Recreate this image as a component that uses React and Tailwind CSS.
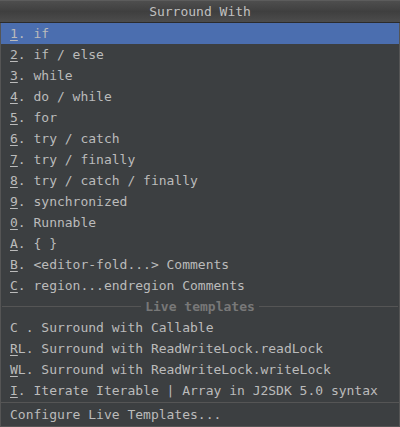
import React from "react";

const items = [
  ["1", ". if"],
  ["2", ". if / else"],
  ["3", ". while"],
  ["4", ". do / while"],
  ["5", ". for"],
  ["6", ". try / catch"],
  ["7", ". try / finally"],
  ["8", ". try / catch / finally"],
  ["9", ". synchronized"],
  ["0", ". Runnable"],
  ["A", ". { }"],
  ["B", ". <editor-fold...> Comments"],
  ["C", ". region...endregion Comments"],
];

const live = [
  ["", "C . Surround with Callable", ""],
  ["R", "L. Surround with ReadWriteLock.readLock"],
  ["W", "L. Surround with ReadWriteLock.writeLock"],
  ["I", ". Iterate Iterable | Array in J2SDK 5.0 syntax"],
];

export default function App() {
  return (
    <div
      className="w-[400px] h-[427px] bg-[#3c3f41] text-[#bbbbbb] text-[13px] flex flex-col overflow-hidden"
      style={{ fontFamily: '"DejaVu Sans Mono", monospace' }}
    >
      <div className="h-[23px] shrink-0 flex items-center justify-center bg-gradient-to-b from-[#4e4e4e] via-[#3f3f3f] to-[#4c4c4c] border-b border-[#2b2b2b] border-t border-t-[#5c5c5c]">
        <span className="text-[#c0c0c0] leading-none">Surround With</span>
      </div>
      <div className="flex-1 flex flex-col border-x border-b border-[#555555]">
        <div className="flex flex-col">
          {items.map(([k, rest], i) => (
            <div
              key={i}
              className={
                "h-[21px] flex items-center pl-[9px] whitespace-pre " +
                (i === 0 ? "bg-[#4b6eaf]" : "")
              }
            >
              <span className="underline underline-offset-2">{k}</span>
              <span>{rest}</span>
            </div>
          ))}
        </div>
        <div className="h-[21px] flex items-center">
          <div className="flex-1 h-px bg-[#555555] ml-[1px]" />
          <span className="px-[4px] font-bold text-[#787878]">Live templates</span>
          <div className="flex-1 h-px bg-[#555555] mr-[1px]" />
        </div>
        <div className="flex flex-col">
          {live.map(([k, rest], i) => (
            <div key={i} className="h-[21px] flex items-center pl-[9px] whitespace-pre">
              {k ? <span className="underline underline-offset-2">{k}</span> : null}
              <span>{rest}</span>
            </div>
          ))}
        </div>
        <div className="h-px bg-[#555555] mt-[1px]" />
        <div className="flex-1 flex items-center pl-[9px] whitespace-pre">
          Configure Live Templates...
        </div>
      </div>
    </div>
  );
}
